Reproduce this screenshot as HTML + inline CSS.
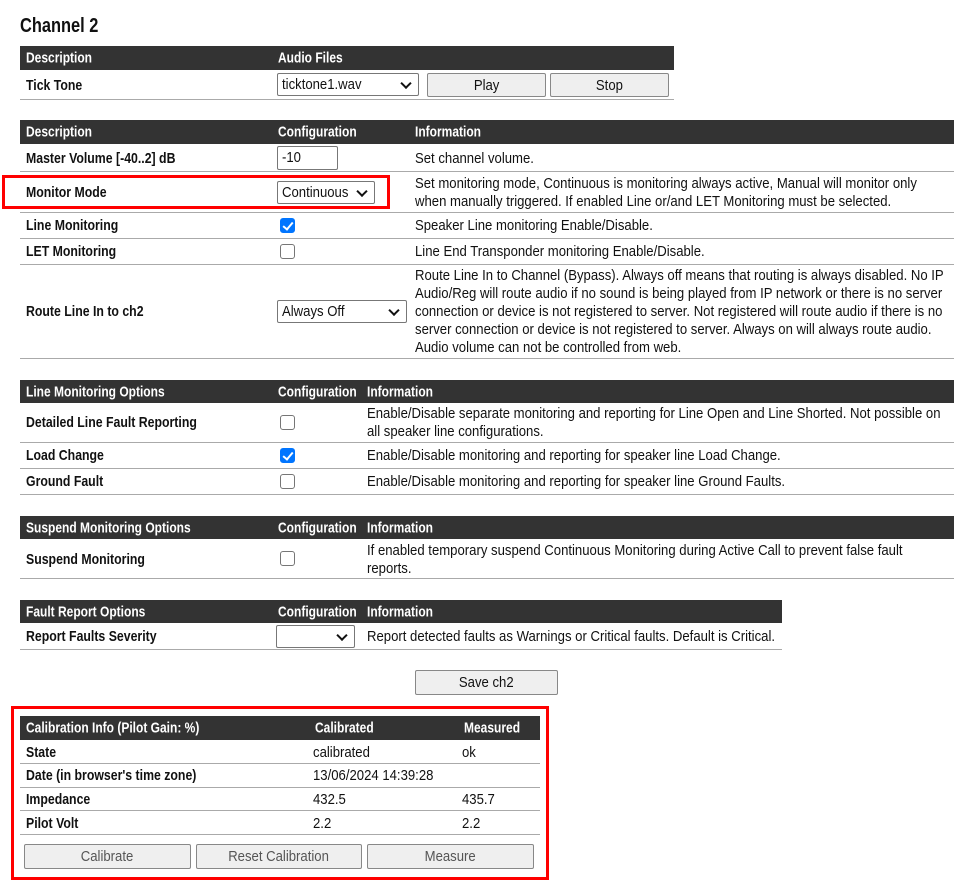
<!DOCTYPE html>
<html><head><meta charset="utf-8"><style>
*{box-sizing:border-box;margin:0;padding:0}
body{width:970px;height:880px;background:#fff;position:relative;font-family:"Liberation Sans",sans-serif;font-size:15px;color:#111;overflow:hidden}
.a{position:absolute;white-space:nowrap;transform:scaleX(.875);transform-origin:left top}
.a.b{transform:scaleX(.82)}
.h{position:absolute;background:#333;color:#fff;font-weight:bold;font-size:15px}
.h span{position:absolute;top:50%;transform:translateY(-50%) scaleX(.8);transform-origin:left center;white-space:nowrap}
.l{position:absolute;height:1px;background:#aaa}
.b{font-weight:bold}
.t{line-height:18px}
.s{display:inline-block;transform:scaleX(.875);transform-origin:left center;white-space:nowrap}
.c{display:inline-block;transform:scaleX(.875);white-space:nowrap}
.sel{position:absolute;border:1px solid #777;border-radius:2px;background:#fff;font-size:15px;padding-left:4px;display:flex;align-items:center}
.sel:after{content:"";position:absolute;right:8px;top:50%;width:6px;height:6px;border-right:2px solid #111;border-bottom:2px solid #111;transform:translateY(-70%) rotate(45deg)}
.btn{position:absolute;border:1px solid #888;border-radius:2px;background:#efefef;text-align:center;font-size:15px;display:flex;align-items:center;justify-content:center}
.cb{position:absolute;width:15px;height:15px;border:1px solid #767676;border-radius:3px;background:#fff}
.cb.on{background:#0075ff;border-color:#0075ff}
.cb.on:after{content:"";position:absolute;left:4px;top:1px;width:4px;height:8px;border-right:2px solid #fff;border-bottom:2px solid #fff;transform:rotate(40deg)}
.red{position:absolute;border:3px solid #f00}
</style></head><body>
<div class="a b" style="left:20px;top:15px;font-size:20px">Channel 2</div>

<div class="h" style="left:20px;top:46px;width:654px;height:24px"><span style="left:6px">Description</span><span style="left:258px">Audio Files</span></div>
<div class="a b" style="left:26px;top:77px">Tick Tone</div>
<div class="sel" style="left:277px;top:73px;width:142px;height:23px"><span class="s">ticktone1.wav</span></div>
<div class="btn" style="left:427px;top:73px;width:119px;height:24px"><span class="c">Play</span></div>
<div class="btn" style="left:550px;top:73px;width:119px;height:24px"><span class="c">Stop</span></div>
<div class="l" style="left:20px;top:99px;width:654px"></div>

<div class="h" style="left:20px;top:120px;width:934px;height:24px"><span style="left:6px">Description</span><span style="left:258px">Configuration</span><span style="left:395px">Information</span></div>
<div class="a b" style="left:26px;top:150px">Master Volume [-40..2] dB</div>
<div class="a" style="left:277px;top:146px;width:61px;height:24px;border:1px solid #777;border-radius:2px;padding:2px 4px;transform:none"><span class="s">-10</span></div>
<div class="a" style="left:415px;top:150px">Set channel volume.</div>
<div class="l" style="left:20px;top:171px;width:934px"></div>
<div class="a b" style="left:26px;top:184px">Monitor Mode</div>
<div class="sel" style="left:277px;top:181px;width:98px;height:23px"><span class="s">Continuous</span></div>
<div class="a t" style="left:415px;top:175px">Set monitoring mode, Continuous is monitoring always active, Manual will monitor only<br>when manually triggered. If enabled Line or/and LET Monitoring must be selected.</div>
<div class="red" style="left:2px;top:175px;width:388px;height:34px"></div>
<div class="l" style="left:20px;top:212px;width:934px"></div>
<div class="a b" style="left:26px;top:217px">Line Monitoring</div>
<div class="cb on" style="left:280px;top:218px"></div>
<div class="a" style="left:415px;top:217px">Speaker Line monitoring Enable/Disable.</div>
<div class="l" style="left:20px;top:238px;width:934px"></div>
<div class="a b" style="left:26px;top:243px">LET Monitoring</div>
<div class="cb" style="left:280px;top:244px"></div>
<div class="a" style="left:415px;top:243px">Line End Transponder monitoring Enable/Disable.</div>
<div class="l" style="left:20px;top:264px;width:934px"></div>
<div class="a b" style="left:26px;top:303px">Route Line In to ch2</div>
<div class="sel" style="left:277px;top:300px;width:130px;height:23px"><span class="s">Always Off</span></div>
<div class="a t" style="left:415px;top:267px">Route Line In to Channel (Bypass). Always off means that routing is always disabled. No IP<br>Audio/Reg will route audio if no sound is being played from IP network or there is no server<br>connection or device is not registered to server. Not registered will route audio if there is no<br>server connection or device is not registered to server. Always on will always route audio.<br>Audio volume can not be controlled from web.</div>
<div class="l" style="left:20px;top:358px;width:934px"></div>

<div class="h" style="left:20px;top:380px;width:934px;height:23px"><span style="left:6px">Line Monitoring Options</span><span style="left:258px">Configuration</span><span style="left:347px">Information</span></div>
<div class="a b" style="left:26px;top:414px">Detailed Line Fault Reporting</div>
<div class="cb" style="left:280px;top:415px"></div>
<div class="a t" style="left:367px;top:405px">Enable/Disable separate monitoring and reporting for Line Open and Line Shorted. Not possible on<br>all speaker line configurations.</div>
<div class="l" style="left:20px;top:442px;width:934px"></div>
<div class="a b" style="left:26px;top:447px">Load Change</div>
<div class="cb on" style="left:280px;top:448px"></div>
<div class="a" style="left:367px;top:447px">Enable/Disable monitoring and reporting for speaker line Load Change.</div>
<div class="l" style="left:20px;top:468px;width:934px"></div>
<div class="a b" style="left:26px;top:473px">Ground Fault</div>
<div class="cb" style="left:280px;top:474px"></div>
<div class="a" style="left:367px;top:473px">Enable/Disable monitoring and reporting for speaker line Ground Faults.</div>
<div class="l" style="left:20px;top:494px;width:934px"></div>

<div class="h" style="left:20px;top:516px;width:934px;height:23px"><span style="left:6px">Suspend Monitoring Options</span><span style="left:258px">Configuration</span><span style="left:347px">Information</span></div>
<div class="a b" style="left:26px;top:551px">Suspend Monitoring</div>
<div class="cb" style="left:280px;top:551px"></div>
<div class="a t" style="left:367px;top:542px">If enabled temporary suspend Continuous Monitoring during Active Call to prevent false fault<br>reports.</div>
<div class="l" style="left:20px;top:578px;width:934px"></div>

<div class="h" style="left:20px;top:600px;width:762px;height:23px"><span style="left:6px">Fault Report Options</span><span style="left:258px">Configuration</span><span style="left:347px">Information</span></div>
<div class="a b" style="left:26px;top:628px">Report Faults Severity</div>
<div class="sel" style="left:276px;top:625px;width:79px;height:23px"></div>
<div class="a" style="left:367px;top:628px">Report detected faults as Warnings or Critical faults. Default is Critical.</div>
<div class="l" style="left:20px;top:649px;width:762px"></div>

<div class="btn" style="left:415px;top:670px;width:143px;height:25px"><span class="c">Save ch2</span></div>

<div class="red" style="left:11px;top:706px;width:538px;height:174px"></div>
<div class="h" style="left:20px;top:716px;width:520px;height:24px"><span style="left:6px">Calibration Info (Pilot Gain: %)</span><span style="left:295px">Calibrated</span><span style="left:444px">Measured</span></div>
<div class="a b" style="left:26px;top:744px">State</div><div class="a" style="left:313px;top:744px">calibrated</div><div class="a" style="left:462px;top:744px">ok</div>
<div class="l" style="left:20px;top:763px;width:520px"></div>
<div class="a b" style="left:26px;top:767px">Date (in browser's time zone)</div><div class="a" style="left:313px;top:767px">13/06/2024 14:39:28</div>
<div class="l" style="left:20px;top:787px;width:520px"></div>
<div class="a b" style="left:26px;top:791px">Impedance</div><div class="a" style="left:313px;top:791px">432.5</div><div class="a" style="left:462px;top:791px">435.7</div>
<div class="l" style="left:20px;top:810px;width:520px"></div>
<div class="a b" style="left:26px;top:815px">Pilot Volt</div><div class="a" style="left:313px;top:815px">2.2</div><div class="a" style="left:462px;top:815px">2.2</div>
<div class="l" style="left:20px;top:834px;width:520px"></div>
<div class="btn" style="left:24px;top:844px;width:167px;height:25px;color:#555"><span class="c">Calibrate</span></div>
<div class="btn" style="left:196px;top:844px;width:166px;height:25px;color:#555"><span class="c">Reset Calibration</span></div>
<div class="btn" style="left:367px;top:844px;width:167px;height:25px;color:#555"><span class="c">Measure</span></div>
</body></html>
